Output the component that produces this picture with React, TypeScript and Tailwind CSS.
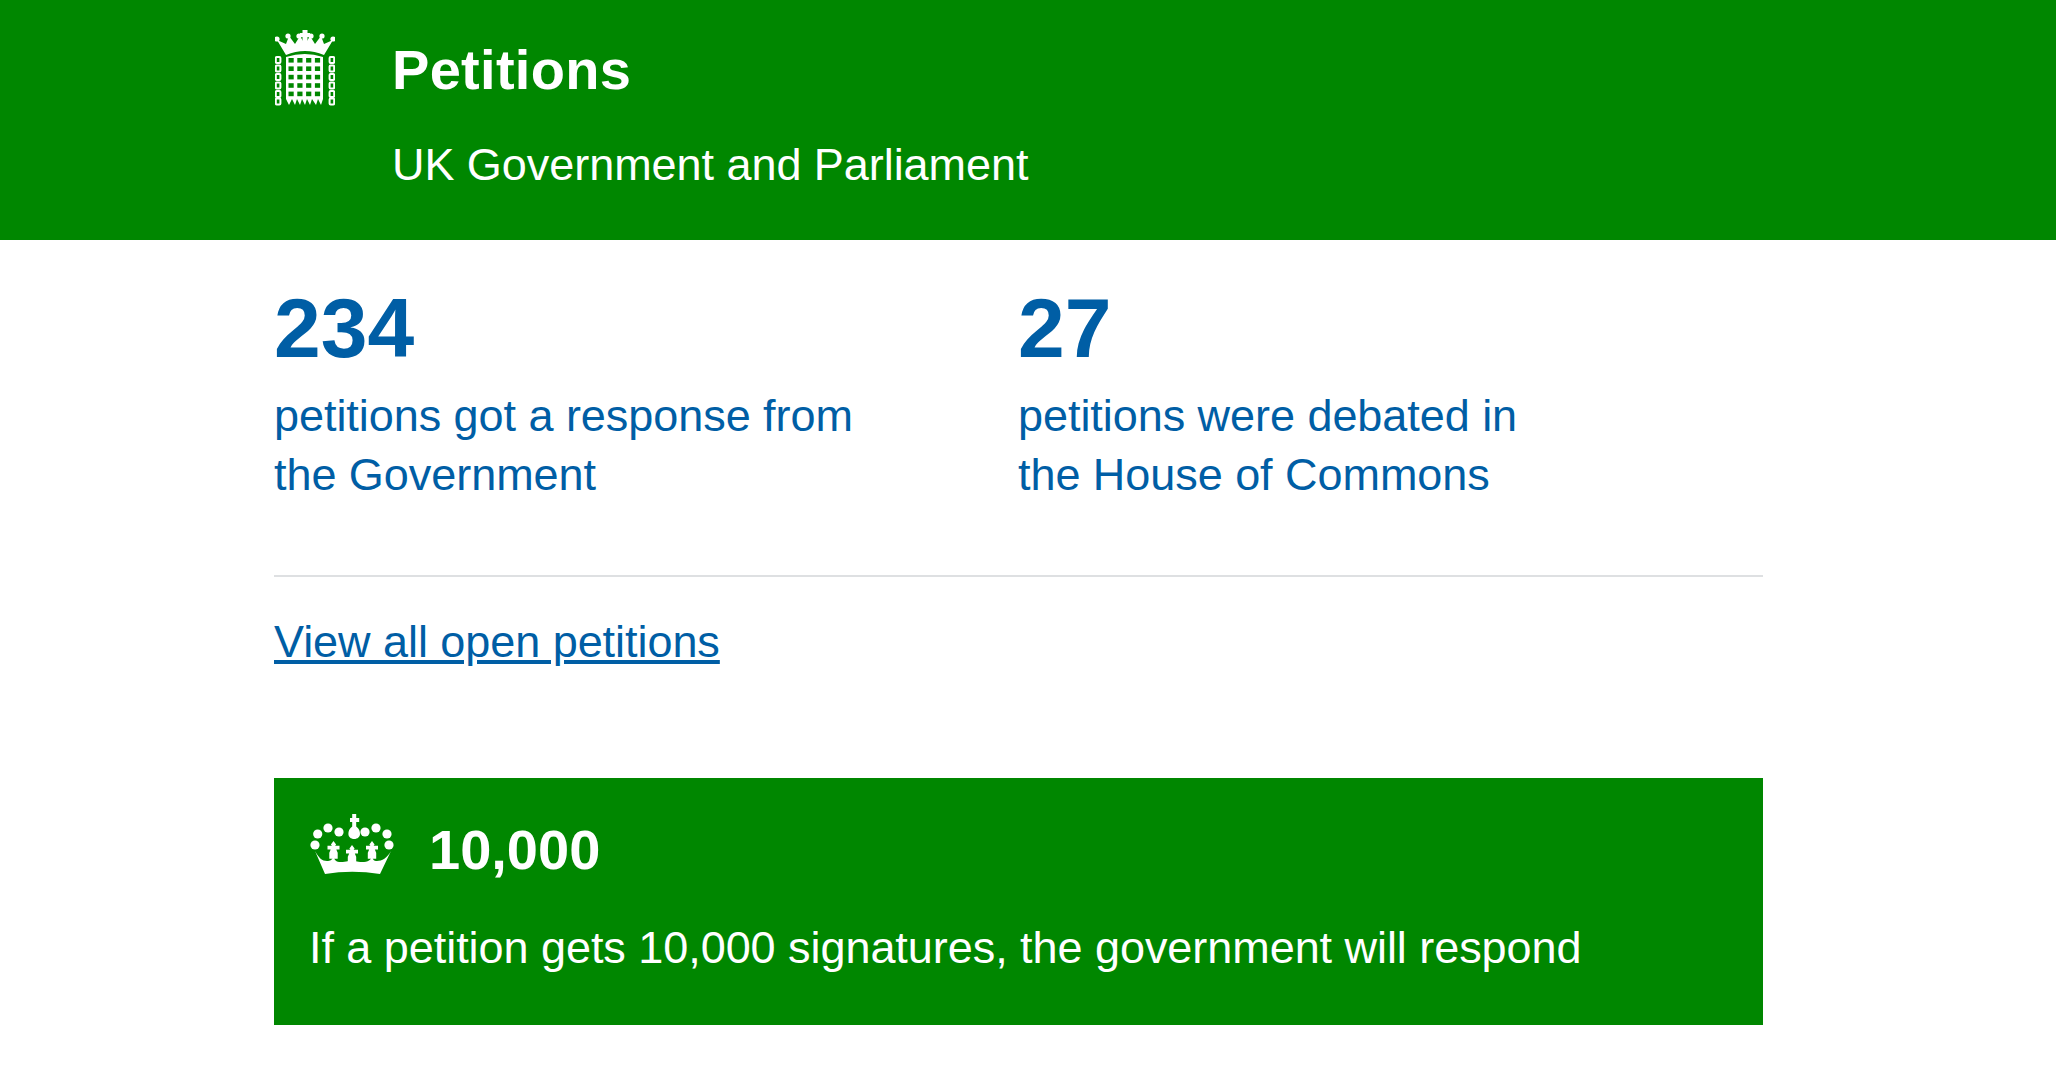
const portcullisCols = [0, 1, 2, 3];
const portcullisRows = [0, 1, 2, 3, 4];

function Portcullis() {
  return (
    <svg viewBox="0 0 60 76" className="w-[60px] h-[76px] shrink-0" fill="#fff">
      {/* crown */}
      <path d="M11 25 L2 10 L11 14 L14 6 L20 14 L25 6 L28 11 H32 L35 6 L40 14 L46 6 L49 14 L58 10 L49 25 Q30 17 11 25 Z" />
      {[
        [2, 9],
        [13, 6],
        [24, 6],
        [36, 6],
        [47, 6],
        [58, 9],
      ].map(([cx, cy]) => (
        <circle key={`${cx}-${cy}`} cx={cx} cy={cy} r="2.6" />
      ))}
      <path d="M27.5 0h5v3h2.5v4h-2.5v4h-5v-4h-2.5v-4h2.5z" />
      {/* grille */}
      <path d="M11 27 Q30 21 48 27 V69 L46 75 L43 69 L41 75 L37 69 L35 75 L32 69 L30 75 L27 69 L25 75 L22 69 L20 75 L17 69 L14 75 L11 69 Z" />
      {portcullisRows.map((row) =>
        portcullisCols.map((col) => (
          <rect
            key={`${row}-${col}`}
            x={13.5 + col * 8.8}
            y={28 + row * 8.4}
            width="5.2"
            height="4.6"
            fill="#008700"
          />
        )),
      )}
      {/* chains */}
      {[0.8, 54.6].map((x) =>
        [27, 35.5, 44, 52.5, 61, 68.5].map((y) => (
          <rect key={`${x}-${y}`} x={x} y={y} width="4.6" height="6" rx="1" fill="none" stroke="#fff" strokeWidth="2" />
        )),
      )}
    </svg>
  );
}

function Fleur({ x, y }: { x: number; y: number }) {
  return (
    <path
      d={`M${x} ${y}l2.6 3.4-1 1.4h4.4v3.6h-3.2l1.4 3.4v6h-8.4v-6l1.4-3.4h-3.2v-3.6h4.4l-1-1.4z`}
    />
  );
}

function Crown() {
  return (
    <svg viewBox="0 0 84 62" className="w-[84px] h-[62px] shrink-0 mt-[2px]" fill="#fff">
      <path d="M40 4h2.2V0h4v4h3v4h-3v4.6c3 2 3.8 5 3.8 7.4 0 2.8-2.4 5-5.8 5s-5.8-2.2-5.8-5c0-2.4.8-5.4 3.8-7.4V8h-2.2z" />
      {[
        [5, 31],
        [7.7, 20],
        [18, 14],
        [29, 18],
        [55, 18],
        [66, 14],
        [77, 20],
        [79, 31],
      ].map(([cx, cy]) => (
        <circle key={`${cx}-${cy}`} cx={cx} cy={cy} r="4.6" />
      ))}
      <path d="M5 37 L15 60 Q42 55.5 70 60 L81 37 C77 44 72 47 67 47 C64 47 62.5 46 62.5 42 H61.5 C61.5 46 58 48 52 48 C47 48 43.5 47 43 44 H41 C40.5 47 36 48 31 48 C26 48 24 46 24 42 H23 C23 46 20 47 17 47 C12 47 9 44 5 37 Z" />
      <Fleur x={23.5} y={27} />
      <Fleur x={42} y={31} />
      <Fleur x={62} y={27} />
    </svg>
  );
}

function Stat({ value, lines, width }: { value: string; lines: string[]; width: string }) {
  return (
    <div className={width}>
      <div className="text-[84px] leading-[84px] font-bold text-[#005ea5]">{value}</div>
      <div className="mt-[16px] text-[45px] leading-[59px] tracking-[-0.05px] text-[#005ea5]">
        {lines.map((line) => (
          <div key={line}>{line}</div>
        ))}
      </div>
    </div>
  );
}

export default function App() {
  return (
    <div className="min-h-screen bg-white font-['Liberation_Sans',Arial,sans-serif] overflow-hidden">
      <header className="h-[240px] bg-[#008700] text-white pl-[275px] pt-[30px] flex gap-[57px]">
        <Portcullis />
        <div>
          <div className="text-[56px] leading-[64px] tracking-[0.3px] font-bold mt-[8px]">Petitions</div>
          <div className="text-[45px] leading-[50px] tracking-[-0.05px] mt-[38px]">UK Government and Parliament</div>
        </div>
      </header>
      <main className="w-[1489px] ml-[274px]">
        <div className="flex pt-[46px] pb-[71px] border-b-2 border-[#dee0e2]">
          <Stat value="234" lines={["petitions got a response from", "the Government"]} width="w-[744px]" />
          <Stat value="27" lines={["petitions were debated in", "the House of Commons"]} width="w-[745px]" />
        </div>
        <div className="mt-[40px]">
          <a href="#" className="text-[45px] leading-[50px] tracking-[-0.05px] text-[#005ea5] underline">
            View all open petitions
          </a>
        </div>
        <section className="mt-[111px] h-[247px] bg-[#008700] text-white pl-[35px] pt-[34px]">
          <div className="flex items-start gap-[35px] ml-[1px]">
            <Crown />
            <div className="text-[56px] leading-[64px] font-bold mt-[6px]">10,000</div>
          </div>
          <p className="text-[45px] leading-[50px] tracking-[-0.05px] mt-[41px]">
            If a petition gets 10,000 signatures, the government will respond
          </p>
        </section>
      </main>
    </div>
  );
}
